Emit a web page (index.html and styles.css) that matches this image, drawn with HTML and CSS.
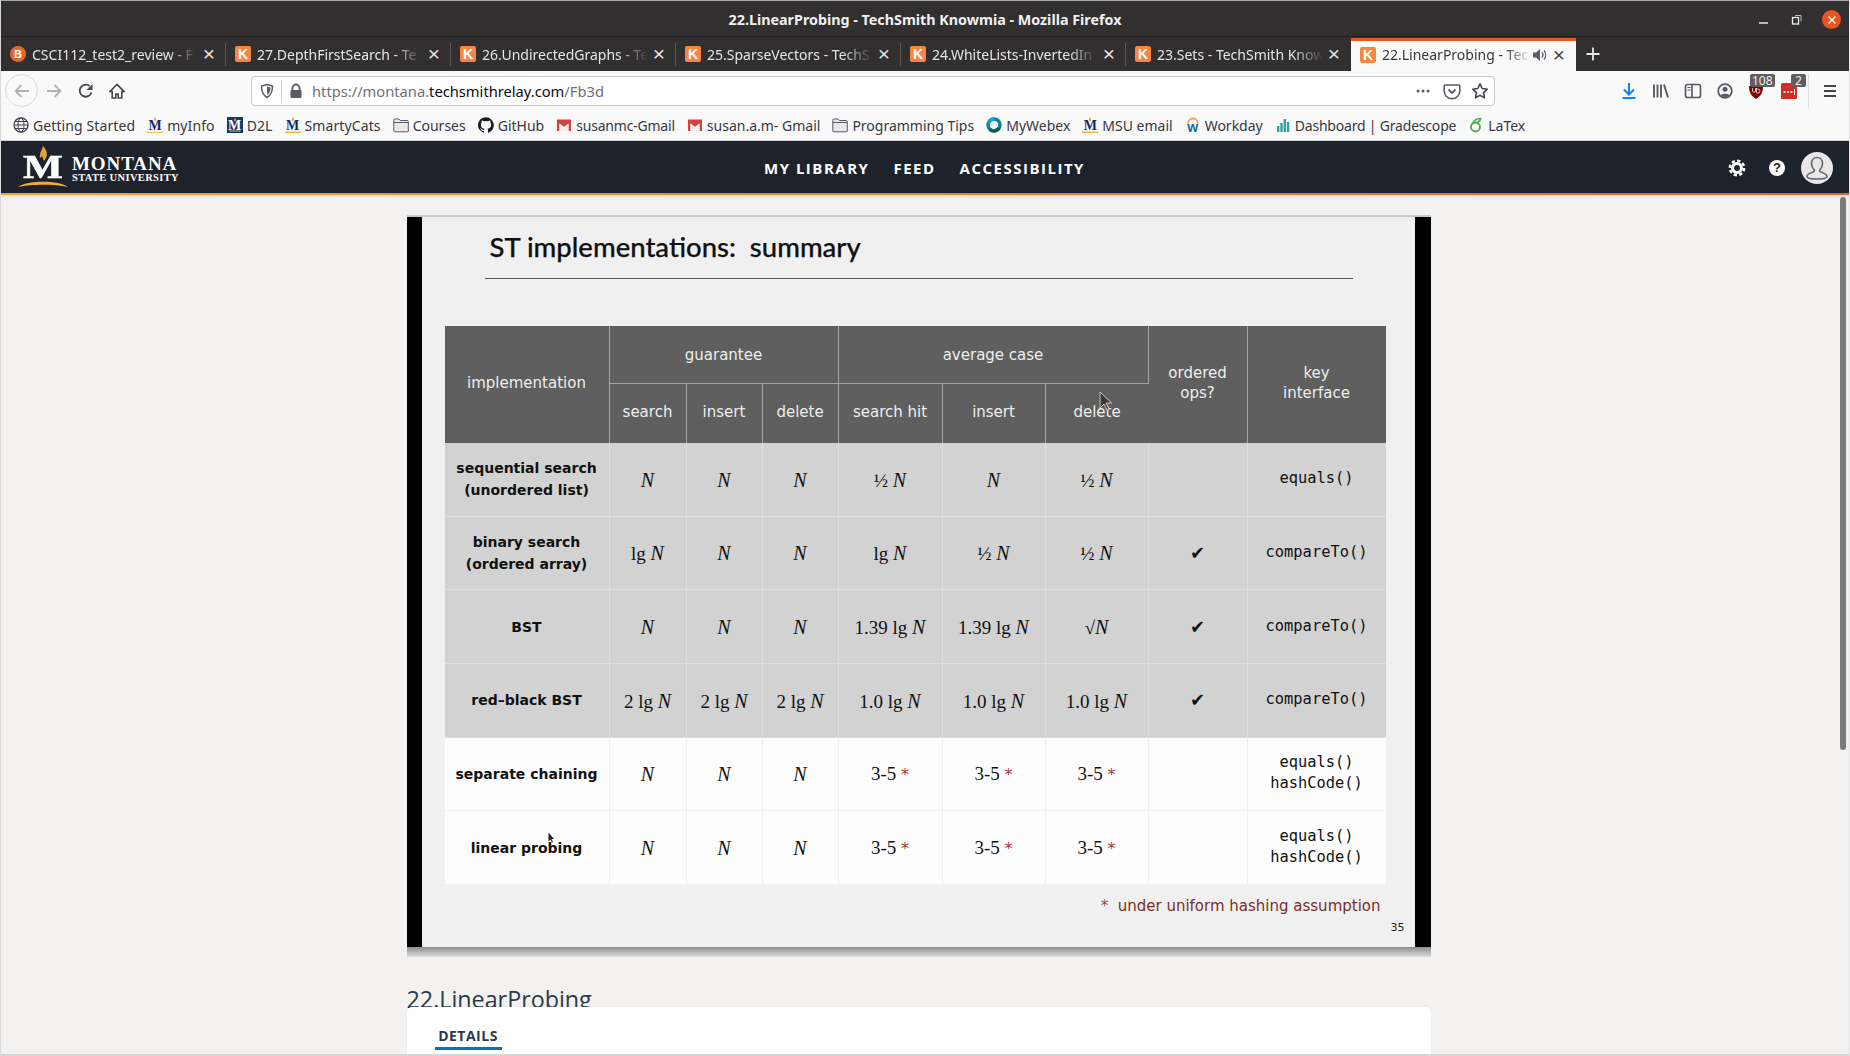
FILE: index.html
```html
<!DOCTYPE html>
<html lang="en">
<head>
<meta charset="utf-8">
<title>22.LinearProbing - TechSmith Knowmia - Mozilla Firefox</title>
<link rel="stylesheet" href="styles.css">
</head>
<body>
<div class="window">
  <header class="titlebar">
    <span class="title-text">22.LinearProbing - TechSmith Knowmia - Mozilla Firefox</span>
    <div class="win-controls">
      <svg class="wc" width="16" height="16" viewBox="0 0 16 16"><path d="M3 11h9" stroke="#f2f2f2" stroke-width="1.4"/></svg>
      <svg class="wc" width="16" height="16" viewBox="0 0 16 16"><path d="M6 3.5h6v6" fill="none" stroke="#bbb" stroke-width="1"/><rect x="3.5" y="5.5" width="6" height="6.5" fill="none" stroke="#f2f2f2" stroke-width="1.3"/></svg>
      <span class="wc-close"><svg width="18" height="18" viewBox="0 0 18 18"><path d="M5.5 5.5l7 7M12.5 5.5l-7 7" stroke="#fff" stroke-width="1.3"/></svg></span>
    </div>
  </header>

  <nav class="tabstrip">
    <div class="tab"><span class="fav fav-d">B</span><span class="tab-label">CSCI112_test2_review - F</span><span class="tab-x">×</span></div>
    <div class="tab"><span class="fav">K</span><span class="tab-label">27.DepthFirstSearch - Te</span><span class="tab-x">×</span></div>
    <div class="tab"><span class="fav">K</span><span class="tab-label">26.UndirectedGraphs - Te</span><span class="tab-x">×</span></div>
    <div class="tab"><span class="fav">K</span><span class="tab-label">25.SparseVectors - TechS</span><span class="tab-x">×</span></div>
    <div class="tab"><span class="fav">K</span><span class="tab-label">24.WhiteLists-InvertedIn</span><span class="tab-x">×</span></div>
    <div class="tab"><span class="fav">K</span><span class="tab-label">23.Sets - TechSmith Know</span><span class="tab-x">×</span></div>
    <div class="tab tab-active"><span class="fav">K</span><span class="tab-label">22.LinearProbing - Tec</span>
      <svg class="speaker" width="16" height="16" viewBox="0 0 16 16"><path d="M1 5.5h3L8 2v12L4 10.500H1z" fill="#5b5b66"/><path d="M10 5.500a4 4 0 0 1 0 5M12 3.500a7 7 0 0 1 0 9" fill="none" stroke="#5b5b66" stroke-width="1.300"/></svg>
      <span class="tab-x">×</span></div>
    <svg class="newtab" width="16" height="16" viewBox="0 0 16 16"><path d="M8 1.500v13M1.500 8h13" stroke="#e8e8e8" stroke-width="1.800"/></svg>
  </nav>

  <div class="toolbar">
    <div class="tb-left">
      <span class="back"><svg width="18" height="18" viewBox="0 0 18 18"><path d="M16 9H2.500M8.500 3L2.500 9l6 6" fill="none" stroke="#b1b1b3" stroke-width="1.800"/></svg></span>
      <svg class="forward" width="18" height="18" viewBox="0 0 18 18"><path d="M2 9h13.500M9.500 3l6 6-6 6" fill="none" stroke="#b1b1b3" stroke-width="1.800"/></svg>
      <svg class="reload" width="16" height="16" viewBox="0 0 16 16"><path d="M13.500 9.500A6 6 0 1 1 11.500 3" fill="none" stroke="#45454d" stroke-width="1.800"/><path d="M14.500 1v6h-6z" fill="#45454d"/></svg>
      <svg class="home" width="16" height="16" viewBox="0 0 16 16"><path d="M8 1.500L1 8.500h2.200V15h3.600v-4h2.400v4h3.600V8.500H15z" fill="none" stroke="#45454d" stroke-width="1.600"/></svg>
    </div>
    <div class="urlbar">
      <svg class="shield" width="16" height="16" viewBox="0 0 16 16"><path d="M8 1.500l5.500 1.500c0 5-1 9-5.500 11.500C3.500 12 2.500 8 2.500 3z" fill="none" stroke="#5b5b66" stroke-width="1.500"/><path d="M8 3.500l3.500 1c0 3-.8 5.800-3.500 7.500z" fill="#5b5b66"/></svg>
      <span class="url-sep"></span>
      <svg class="lock" width="14" height="16" viewBox="0 0 14 16"><path d="M3.500 7V5a3.500 3.500 0 0 1 7 0v2" fill="none" stroke="#5b5b66" stroke-width="1.800"/><rect x="1.500" y="7" width="11" height="8" rx="1" fill="#5b5b66"/></svg>
      <span class="url"><span class="url-dim">https://montana.</span>techsmithrelay.com<span class="url-dim">/Fb3d</span></span>
      <svg class="dots" width="16" height="16" viewBox="0 0 16 16"><circle cx="3" cy="8" r="1.500" fill="#5b5b66"/><circle cx="8" cy="8" r="1.500" fill="#5b5b66"/><circle cx="13" cy="8" r="1.500" fill="#5b5b66"/></svg>
      <svg class="pocket" width="18" height="18" viewBox="0 0 18 18"><path d="M2 3h14a.8.8 0 0 1 .8.800V9a7.800 7.800 0 0 1-15.600 0V3.800A.8.8 0 0 1 2 3z" fill="none" stroke="#5b5b66" stroke-width="1.600"/><path d="M5.500 7.500L9 11l3.500-3.500" fill="none" stroke="#5b5b66" stroke-width="1.800"/></svg>
      <svg class="star" width="18" height="18" viewBox="0 0 18 18"><path d="M9 1.800l2.200 4.700 5.100.7-3.700 3.500.9 5.100L9 13.400l-4.500 2.400.9-5.100-3.700-3.500 5.100-.7z" fill="none" stroke="#45454d" stroke-width="1.600" stroke-linejoin="round"/></svg>
    </div>
    <div class="tb-right">
      <svg class="tb-ic" width="16" height="18" viewBox="0 0 16 18"><path d="M8 1v11M3 7.500L8 12.500l5-5" fill="none" stroke="#0a84ff" stroke-width="2"/><path d="M1.500 16h13" stroke="#0a84ff" stroke-width="2"/></svg>
      <svg class="tb-ic" width="18" height="16" viewBox="0 0 18 16"><path d="M2 1.500v13M5.500 1.500v13M9 1.500v13M12 1.500l4 13" fill="none" stroke="#5b5b66" stroke-width="1.900"/></svg>
      <svg class="tb-ic tb-side" width="18" height="16" viewBox="0 0 18 16"><rect x="1.500" y="1.500" width="15" height="13" rx="2" fill="none" stroke="#5b5b66" stroke-width="1.700"/><path d="M8 1.500v13" stroke="#5b5b66" stroke-width="1.700"/><path d="M3.500 4.500h3M3.500 7h3" stroke="#5b5b66" stroke-width="1.200"/></svg>
      <svg class="tb-ic" width="16" height="16" viewBox="0 0 16 16"><circle cx="8" cy="8" r="6.800" fill="none" stroke="#5b5b66" stroke-width="1.800"/><circle cx="8" cy="6.300" r="2.500" fill="#5b5b66"/><path d="M3.500 12.500c1-2.500 8-2.500 9 0A7 7 0 0 1 3.500 12.500z" fill="#5b5b66"/></svg>
      <span class="ext ext-ub"><svg width="16" height="16" viewBox="0 0 16 16"><path d="M1 3h14c0 6-2 10-7 13C3 13 1 9 1 3z" fill="#800000"/><path d="M4.500 5v3.500a2 2 0 0 0 3 0V5M8.500 5v5h1.500a2 2 0 0 0 0-4h-1.500" fill="none" stroke="#e9c9c9" stroke-width=".9"/></svg><span class="badge badge-ub">108</span></span>
      <span class="ext ext-lp"><svg width="16" height="16" viewBox="0 0 16 16"><rect width="16" height="16" rx="1.500" fill="#d32d27"/><circle cx="3.500" cy="9" r="1.100" fill="#fff"/><circle cx="7" cy="9" r="1.100" fill="#fff"/><circle cx="10.500" cy="9" r="1.100" fill="#fff"/><path d="M13.500 6v6" stroke="#fff" stroke-width="1"/></svg><span class="badge badge-lp">2</span></span>
      <span class="tb-sep"></span>
      <svg class="tb-menu" width="14" height="14" viewBox="0 0 14 14"><path d="M1 2h12M1 7h12M1 12h12" stroke="#45454d" stroke-width="1.800"/></svg>
    </div>
  </div>

  <div class="bookmarks">
    <a class="bm"><svg width="16" height="16" viewBox="0 0 16 16"><circle cx="8" cy="8" r="7" fill="none" stroke="#45454d" stroke-width="1.300"/><ellipse cx="8" cy="8" rx="3" ry="7" fill="none" stroke="#45454d"/><path d="M1 8h14M2 4.500h12M2 11.500h12" stroke="#45454d"/></svg>Getting Started</a>
    <a class="bm"><span class="mm"><svg width="16" height="16" viewBox="0 0 16 16"><path d="M8 0c1.500 1.500 1.500 3 0 5-1.500-2-1.500-3.500 0-5z" fill="#e9a93b"/><path d="M0 14.500c4 1 12 1 16 0v1.500H0z" fill="#efb449"/></svg><b class="mm-m">M</b></span>myInfo</a>
    <a class="bm"><span class="mm mm-box"><svg width="16" height="16" viewBox="0 0 16 16"><path d="M8 1c1.200 1.200 1.200 2.500 0 4-1.200-1.500-1.200-2.800 0-4z" fill="#e9a93b"/><path d="M2.500 13.500h11v1h-11z" fill="#efb449"/></svg><b class="mm-m mm-w">M</b></span>D2L</a>
    <a class="bm"><span class="mm"><svg width="16" height="16" viewBox="0 0 16 16"><path d="M8 0c1.500 1.500 1.500 3 0 5-1.500-2-1.500-3.500 0-5z" fill="#e9a93b"/><path d="M0 14.500h16V16H0z" fill="#efb449"/></svg><b class="mm-m">M</b></span>SmartyCats</a>
    <a class="bm"><svg width="16" height="16" viewBox="0 0 16 16"><path d="M.8 3.500V2.800A1 1 0 0 1 1.800 2h4l1.500 1.500h7a1 1 0 0 1 1 1V14a.8.8 0 0 1-.8.800H1.600A.8.8 0 0 1 .8 14z" fill="#e9e9e9" stroke="#5b5b66"/><path d="M.8 5.500h14.400" stroke="#5b5b66"/></svg>Courses</a>
    <a class="bm"><svg width="16" height="16" viewBox="0 0 16 16"><path d="M8 .2a8 8 0 0 0-2.500 15.600c.4.100.5-.2.500-.4v-1.400c-2.200.5-2.700-1-2.700-1-.4-.9-.9-1.200-.9-1.200-.7-.5.100-.5.100-.5.800.1 1.200.8 1.200.8.700 1.200 1.900.9 2.300.7.100-.5.300-.9.500-1.100-1.800-.2-3.600-.9-3.600-4 0-.9.300-1.600.8-2.100-.1-.2-.4-1 .1-2.100 0 0 .7-.2 2.200.8a7.500 7.500 0 0 1 4 0c1.500-1 2.200-.8 2.200-.8.400 1.100.2 1.900.1 2.100.5.600.8 1.300.8 2.100 0 3.100-1.900 3.700-3.700 3.900.3.300.6.800.6 1.500v2.200c0 .2.100.5.600.4A8 8 0 0 0 8 .2z" fill="#1b1b1f"/></svg>GitHub</a>
    <a class="bm"><svg width="16" height="16" viewBox="0 0 16 16"><path d="M1 2.500h14V14h-2.500V6.500L8 10 3.500 6.500V14H1z" fill="#d3453a"/><path d="M3.500 6.500L8 10l4.500-3.500V14h-9z" fill="#eee"/></svg>susanmc-Gmail</a>
    <a class="bm"><svg width="16" height="16" viewBox="0 0 16 16"><path d="M1 2.500h14V14h-2.500V6.500L8 10 3.500 6.500V14H1z" fill="#d3453a"/><path d="M3.500 6.500L8 10l4.500-3.500V14h-9z" fill="#eee"/></svg>susan.a.m- Gmail</a>
    <a class="bm"><svg width="16" height="16" viewBox="0 0 16 16"><path d="M.8 3.500V2.800A1 1 0 0 1 1.800 2h4l1.500 1.500h7a1 1 0 0 1 1 1V14a.8.8 0 0 1-.8.800H1.600A.8.8 0 0 1 .8 14z" fill="#e9e9e9" stroke="#5b5b66"/><path d="M.8 5.500h14.400" stroke="#5b5b66"/></svg>Programming Tips</a>
    <a class="bm"><svg width="16" height="16" viewBox="0 0 16 16"><circle cx="8" cy="8" r="6" fill="none" stroke="#0e7fa8" stroke-width="3.400"/><path d="M13 11A6 6 0 0 1 4 12.500" fill="none" stroke="#0b5c4a" stroke-width="3.400"/><path d="M2.500 6A6 6 0 0 1 9 2.100" fill="none" stroke="#14a0d0" stroke-width="3.400"/></svg>MyWebex</a>
    <a class="bm"><span class="mm"><svg width="16" height="16" viewBox="0 0 16 16"><path d="M8 0c1.500 1.500 1.500 3 0 5-1.500-2-1.500-3.500 0-5z" fill="#e9a93b"/><path d="M0 14.500h16V16H0z" fill="#efb449"/></svg><b class="mm-m">M</b></span>MSU email</a>
    <a class="bm"><span class="wd"><svg width="16" height="16" viewBox="0 0 16 16"><path d="M3 6.500a5 5 0 0 1 10 0" fill="none" stroke="#f5a53a" stroke-width="1.800"/></svg><b class="wd-w">w</b></span>Workday</a>
    <a class="bm"><svg width="16" height="16" viewBox="0 0 16 16"><path d="M2 9h2.400v6H2zM5.300 6h2.400v9H5.300zM8.600 2h2.400v13H8.600zM11.900 5h2.400v10h-2.400z" fill="#2aa7a5"/></svg>Dashboard | Gradescope</a>
    <a class="bm"><svg width="16" height="16" viewBox="0 0 16 16"><circle cx="7.500" cy="10" r="4.500" fill="none" stroke="#4cae4c" stroke-width="1.900"/><path d="M4.500 7C5.500 3.500 8.500 1.500 12.500 1.500c0 2-2 3.500-4.500 4" fill="none" stroke="#4cae4c" stroke-width="1.700"/></svg>LaTex</a>
  </div>

  <div class="sitenav">
    <div class="logo">
      <span class="logo-mark">
        <svg class="logo-art" width="52" height="42" viewBox="0 0 52 42"><path d="M26 0c5 5 5 10 1 15-1-2-1-3-2-5-1 2-3 3-2-1 0-3 2-5 3-9z" fill="#e5a23b"/><path d="M1 41C10 34 42 34 51 41 38 38 14 38 1 41z" fill="#f2ac3b"/></svg>
        <b class="logo-m">M</b>
      </span>
      <span class="wordmark"><b class="wm-top">MONTANA</b><b class="wm-sub">STATE UNIVERSITY</b></span>
    </div>
    <div class="site-links"><a>MY LIBRARY</a><a>FEED</a><a>ACCESSIBILITY</a></div>
    <div class="site-icons">
      <svg width="18" height="18" viewBox="0 0 18 18"><circle cx="9" cy="9" r="7.200" fill="none" stroke="#fff" stroke-width="2.400" stroke-dasharray="3.300 2.350"/><circle cx="9" cy="9" r="4.500" fill="none" stroke="#fff" stroke-width="3"/></svg>
      <span class="help">?</span>
      <span class="avatar"><svg width="32" height="32" viewBox="0 0 32 32"><path d="M16 5.500c-3.500 0-5.500 2.700-5.500 6 0 3 1.300 5 2.700 6.300.5 1-.1 1.800-1.200 2.200-3 1-6 2.500-6 4.500 0 1.500 4 2.500 10 2.500s10-1 10-2.500c0-2-3-3.500-6-4.500-1.100-.4-1.700-1.200-1.200-2.200 1.400-1.300 2.700-3.300 2.700-6.300 0-3.300-2-6-5.500-6z" fill="none" stroke="#6a6a6a" stroke-width="1.700"/></svg></span>
    </div>
  </div>
  <div class="accent"></div>

  <main class="page">
    <div class="column">
      <section class="player">
        <div class="slide">
          <h1 class="slide-title">ST implementations:&nbsp; summary</h1>
          <table class="st">
            <colgroup><col class="c1"><col class="c2"><col class="c3"><col class="c4"><col class="c5"><col class="c6"><col class="c7"><col class="c8"><col class="c9"></colgroup>
            <thead>
              <tr>
                <th rowspan="2">implementation</th>
                <th colspan="3">guarantee</th>
                <th colspan="3">average case</th>
                <th rowspan="2">ordered<br>ops?</th>
                <th rowspan="2">key<br>interface</th>
              </tr>
              <tr class="head-sub"><th>search</th><th>insert</th><th>delete</th><th>search hit</th><th>insert</th><th>delete</th></tr>
            </thead>
            <tbody class="gray">
              <tr><td class="nm">sequential search<br>(unordered list)</td><td><i>N</i></td><td><i>N</i></td><td><i>N</i></td><td>½ <i>N</i></td><td><i>N</i></td><td>½ <i>N</i></td><td></td><td class="code">equals()</td></tr>
              <tr><td class="nm">binary search<br>(ordered array)</td><td>lg <i>N</i></td><td><i>N</i></td><td><i>N</i></td><td>lg <i>N</i></td><td>½ <i>N</i></td><td>½ <i>N</i></td><td class="ck">✔</td><td class="code">compareTo()</td></tr>
              <tr><td class="nm">BST</td><td><i>N</i></td><td><i>N</i></td><td><i>N</i></td><td>1.39 lg <i>N</i></td><td>1.39 lg <i>N</i></td><td>√<i>N</i></td><td class="ck">✔</td><td class="code">compareTo()</td></tr>
              <tr><td class="nm">red–black BST</td><td>2 lg <i>N</i></td><td>2 lg <i>N</i></td><td>2 lg <i>N</i></td><td>1.0 lg <i>N</i></td><td>1.0 lg <i>N</i></td><td>1.0 lg <i>N</i></td><td class="ck">✔</td><td class="code">compareTo()</td></tr>
            </tbody>
            <tbody class="white">
              <tr><td class="nm">separate chaining</td><td><i>N</i></td><td><i>N</i></td><td><i>N</i></td><td>3-5 <span class="ast">*</span></td><td>3-5 <span class="ast">*</span></td><td>3-5 <span class="ast">*</span></td><td></td><td class="code">equals()<br>hashCode()</td></tr>
              <tr><td class="nm">linear probing</td><td><i>N</i></td><td><i>N</i></td><td><i>N</i></td><td>3-5 <span class="ast">*</span></td><td>3-5 <span class="ast">*</span></td><td>3-5 <span class="ast">*</span></td><td></td><td class="code">equals()<br>hashCode()</td></tr>
            </tbody>
          </table>
          <p class="footnote"><span class="fn-ast">*</span>&nbsp; under uniform hashing assumption</p>
          <p class="pageno">35</p>
        </div>
        <svg class="cursor cursor-a" width="14" height="20" viewBox="0 0 14 20"><path d="M1 1v16l4-4 3 6 2-1-3-6h5.500z" fill="#3a3a3a" stroke="#ddd" stroke-width=".8"/></svg>
        <svg class="cursor cursor-b" width="7" height="11" viewBox="0 0 7 11"><path d="M.5.500v9l2-2 1.500 3 1-.5-1.500-3H6z" fill="#222"/></svg>
      </section>
      <h2 class="video-title">22.LinearProbing</h2>
      <section class="card">
        <div class="card-tab">DETAILS</div>
      </section>
    </div>
    <div class="scrollthumb"></div>
  </main>
</div>
</body>
</html>
```

FILE: styles.css
```css
* { box-sizing: border-box; }
html, body { margin: 0; padding: 0; }
body { width: 1850px; height: 1056px; overflow: hidden; background: #f3f2f1; }
.window { width: 1850px; height: 1056px; display: flex; flex-direction: column; overflow: hidden; border-top: 1px solid #a9a9a9; border-left: 1px solid #d9d9d9; border-right: 1px solid #e4e4e4; font-family: "Noto Sans", sans-serif; }

/* Title bar */
.titlebar { height: 36px; flex: none; background: #312f30; border-bottom: 1px solid #1f1d1e; display: flex; align-items: center; justify-content: center; position: relative; padding-top: 2px; }
.title-text { font-size: 14.3px; font-weight: 700; color: #f0f0f0; }
.win-controls { position: absolute; right: 8px; top: 9px; display: flex; align-items: center; gap: 17px; }
.wc-close { width: 19px; height: 19px; border-radius: 50%; background: #e95420; display: flex; align-items: center; justify-content: center; }

/* Tabs */
.tabstrip { height: 34px; flex: none; background: #312f30; display: flex; align-items: stretch; }
.tab { width: 225px; flex: none; position: relative; display: flex; align-items: center; padding: 0 9px; color: #e6e6e6; font-size: 14px; }
.tab::after { content: ""; position: absolute; right: 0; top: 6px; bottom: 5px; width: 1px; background: #5c5a5b; }
.tab:nth-child(6)::after { display: none; }
.fav { width: 16px; height: 16px; flex: none; border-radius: 2px; background: linear-gradient(135deg, #f58a3c, #f6824a); color: #fff; font: 700 14px/16px "Liberation Sans", sans-serif; text-align: center; }
.fav-d { border-radius: 50%; background: #e5692a; font-size: 11px; border: 2px solid #e5692a; line-height: 12px; }
.tab-label { flex: 1; min-width: 0; margin-left: 6px; white-space: nowrap; overflow: hidden; -webkit-mask-image: linear-gradient(90deg, #000 82%, transparent 100%); mask-image: linear-gradient(90deg, #000 82%, transparent 100%); }
.tab-x { width: 16px; flex: none; font: 400 21px/20px "Liberation Sans", sans-serif; text-align: center; color: #e6e6e6; margin-left: 3px; }
.tab-active { background: #f9f9fa; border-top: 3px solid #e95420; margin-top: 1px; color: #38383d; padding-bottom: 3px; }
.tab-active::after { display: none; }
.tab-active .tab-x { color: #45454d; }
.speaker { flex: none; }
.newtab { align-self: center; margin-left: 9px; }

/* Toolbar */
.toolbar { height: 37px; flex: none; background: #f9f9fa; display: flex; align-items: center; position: relative; padding-top: 2px; }
.tb-left { width: 250px; flex: none; display: flex; align-items: center; padding-left: 4px; }
.back { width: 33px; height: 33px; border: 1px solid #d9d9dc; border-radius: 50%; display: flex; align-items: center; justify-content: center; background: #fafafa; flex: none; }
.forward { margin-left: 7px; }
.reload { margin-left: 15px; }
.home { margin-left: 15px; }
.urlbar { width: 1244px; height: 30px; flex: none; background: #fff; border: 1px solid #c8c8cc; border-radius: 4px; display: flex; align-items: center; padding: 0 5px 0 7px; }
.url-sep { width: 1px; height: 22px; background: #d0d0d4; margin-left: 6px; }
.lock { margin-left: 7px; }
.url { flex: 1; margin-left: 9px; font-size: 14.7px; color: #0c0c0d; white-space: nowrap; }
.url-dim { color: #6f6f78; }
.dots { margin-right: 12px; }
.pocket { margin-right: 10px; }
.tb-right { flex: 1; display: flex; align-items: center; padding-left: 126px; }
.tb-ic { flex: none; margin-right: 15px; }
.tb-side { margin-left: -1px; }
.ext { position: relative; width: 16px; height: 16px; display: block; margin-right: 17px; }
.ext svg { display: block; }
.badge { position: absolute; top: -9px; height: 13px; background: #5e5e5e; color: #eee; font: 12px/13px "Noto Sans", sans-serif; border-radius: 2px; padding: 0 2px; }
.badge-ub { left: 2px; }
.badge-lp { left: 10px; padding: 0 4px; }
.tb-sep { width: 1px; height: 34px; background: #dcdcdc; margin-left: -6px; }
.tb-menu { margin-left: 14px; }

/* Bookmarks */
.bookmarks { height: 33px; flex: none; background: #f9f9fa; display: flex; align-items: center; padding: 2px 0 0 12px; gap: 12px; font-size: 14px; color: #38383d; border-bottom: 1px solid #d4d4d6; }
.bm { display: flex; align-items: center; gap: 4px; white-space: nowrap; }
.bm:nth-child(-n+4) { letter-spacing: .1px; }
.bm:nth-child(7) { letter-spacing: -.2px; }
.bm:nth-child(13) { letter-spacing: -.2px; }
.bm svg { flex: none; display: block; }
.mm { position: relative; width: 16px; height: 16px; flex: none; display: block; }
.mm-box { background: #0d3a70; }
.mm-m { position: absolute; left: 0; right: 0; top: 2px; text-align: center; font: 700 14px/14px "Liberation Serif", serif; color: #12296b; }
.mm-w { color: #fff; }
.wd { position: relative; width: 16px; height: 16px; flex: none; display: block; }
.wd-w { position: absolute; left: 0; right: 0; top: 4px; text-align: center; font: 700 14px/12px "Liberation Sans", sans-serif; color: #0a6ea8; }

/* Site nav */
.sitenav { height: 52px; flex: none; background: #1e232b; display: flex; align-items: center; position: relative; padding-left: 16px; }
.logo { display: flex; align-items: center; width: 747px; flex: none; }
.logo-mark { position: relative; width: 52px; height: 42px; display: block; flex: none; }
.logo-art { display: block; }
.logo-m { position: absolute; left: 0; right: 0; top: 5px; text-align: center; font: 700 33px/33px "Liberation Serif", serif; color: #fff; transform: scaleX(1.28); -webkit-text-stroke: .5px #fff; }
.wordmark { display: flex; flex-direction: column; margin-left: 3px; padding-top: 4px; color: #fff; font-family: "Liberation Serif", serif; }
.wm-top { font-size: 19px; line-height: 16px; letter-spacing: .9px; }
.wm-sub { font-size: 10.5px; line-height: 11px; letter-spacing: .35px; }
.site-links { display: flex; gap: 24px; margin-top: 2px; font: 700 15px/20px "Open Sans", sans-serif; letter-spacing: 1.5px; color: #fff; }
.site-icons { position: absolute; right: 16px; top: 11px; display: flex; align-items: center; }
.site-icons svg { display: block; }
.help { width: 16px; height: 16px; border-radius: 50%; background: #fff; color: #1e232b; font: 700 13px/16px "Liberation Sans", sans-serif; text-align: center; margin-left: 23px; margin-right: 16px; }
.avatar { width: 32px; height: 32px; border-radius: 50%; background: #e8e8e8; display: block; }
.accent { height: 2px; flex: none; background: linear-gradient(90deg, #eda532, #e0672f); box-shadow: 0 2px 3px rgba(0,0,0,.1); position: relative; }

/* Page */
.page { flex: 1; min-height: 0; position: relative; overflow: hidden; display: flex; justify-content: center; padding: 20px 13px 0 0; border-bottom: 2px solid #d6d6d6; }
.column { width: 1024px; flex: none; }
.player { position: relative; padding-top: 2px; height: 742px; background: linear-gradient(#c8c8c8 2px, transparent 2px), linear-gradient(to bottom, transparent 732px, #8e8e8e 732px, #dcdcdc 742px); }
.slide { height: 730px; border-left: 15px solid #000; border-right: 16px solid #000; background: #f0f0f0; padding: 0 29px 0 23px; }
.slide-title { margin: 0 -6px 0 40px; height: 62px; border-bottom: 1px solid #555; padding: 10px 0 0 5px; font: 500 27.5px/40px Lato, sans-serif; -webkit-text-stroke: .25px #111; color: #111; width: 868px; }
.st { width: 941px; table-layout: fixed; border-collapse: separate; border-spacing: 0; margin-top: 47px; font-family: "DejaVu Sans", sans-serif; }
.c1 { width: 165px; } .c2 { width: 77px; } .c3 { width: 76px; } .c4 { width: 76px; } .c5 { width: 104px; } .c6 { width: 103px; } .c7 { width: 103px; } .c8 { width: 99px; } .c9 { width: 138px; }
.st th { height: 58px; background: #5f5f5f; color: #eee; font-weight: 400; font-size: 15px; line-height: 20px; text-align: center; vertical-align: middle; padding: 0 0 3px; border-right: 1px solid #a3a3a3; }
.st .head-sub th { height: 59px; }
.st thead tr:first-child th[colspan] { border-bottom: 1px solid #a3a3a3; padding-bottom: 0; }
.st th:last-child { border-right: 0; }
.st td { height: 73.67px; padding: 2px 0 0; text-align: center; vertical-align: middle; font: 400 19px/22px "Liberation Serif", serif; color: #111; }
.st td i { font-size: 20px; }
.gray td { background: #d2d2d2; border-right: 1px solid #dedede; border-bottom: 1px solid #dedede; }
.white td { background: #fdfdfd; border-right: 1px solid #efefef; border-bottom: 1px solid #f3f3f3; }
.st td:last-child { border-right: 0; }
.st td.nm { padding: 0; font: 700 14px/22px "DejaVu Sans", sans-serif; color: #111; }
.st td.code { padding: 0 0 1px; font: 400 15.4px/21px "DejaVu Sans Mono", monospace; color: #111; }
.st td.ck { padding: 0; font: 400 18px/22px "DejaVu Sans", sans-serif; }
.ast { color: #a33b33; font-family: "DejaVu Sans", sans-serif; font-size: 16px; }
.footnote { margin: 9px 5px 0 0; text-align: right; font: 400 15px/24px "DejaVu Sans", sans-serif; color: #7a2f2a; }
.fn-ast { color: #8d5450; }
.pageno { margin: 1px -19px 0 0; text-align: right; font: 400 11px/18px "DejaVu Sans", sans-serif; color: #222; }
.cursor { position: absolute; display: block; }
.cursor-a { left: 692px; top: 176px; }
.cursor-b { left: 141px; top: 617px; }
.video-title { margin: 26px 0 0; font: 400 23.3px/32px "Open Sans", sans-serif; color: #2b3a45; height: 32px; }
.card { background: #fff; border-radius: 5px 5px 0 0; position: relative; margin-top: -8px; height: 60px; padding-left: 28px; box-shadow: 0 0 2px rgba(0,0,0,.08); }
.card-tab { display: inline-block; padding: 20px 0 2px; width: 67px; text-align: center; font: 700 14px/18px "Open Sans", sans-serif; letter-spacing: .5px; color: #2b3a45; border-bottom: 3px solid #0a6fc2; }
.scrollthumb { position: absolute; right: 3px; top: 2px; width: 6px; height: 553px; border-radius: 3px; background: #7b7b7b; }
```
